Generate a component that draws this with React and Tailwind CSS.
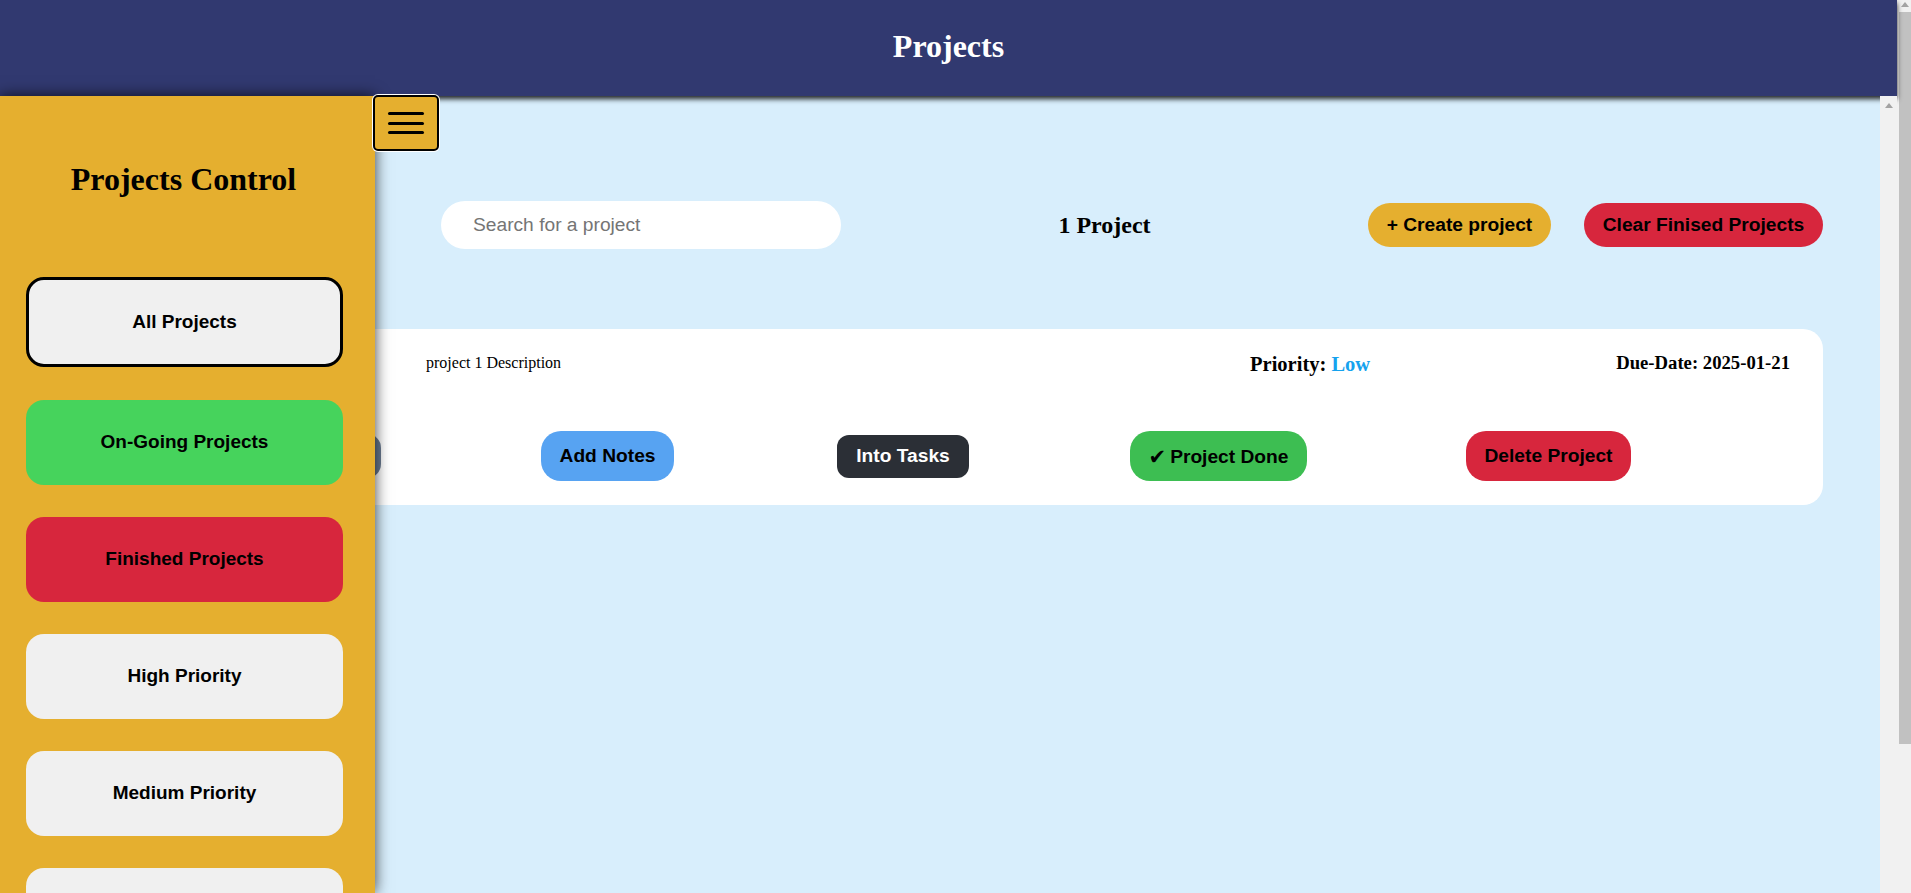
import React from "react";

const sideButtons = [
  { label: "On-Going Projects", color: "bg-[#46D35C]" },
  { label: "Finished Projects", color: "bg-[#D7263D]" },
  { label: "High Priority", color: "bg-[#F0F0F0]" },
  { label: "Medium Priority", color: "bg-[#F0F0F0]" },
  { label: "Low Priority", color: "bg-[#F0F0F0]" },
];

const UpArrow = ({ className }) => (
  <svg className={className} width="8" height="5" viewBox="0 0 8 5">
    <polygon points="0,5 4,0 8,5" fill="#A3A3A3" />
  </svg>
);

const Sidebar = () => {
  return (
    <aside className="absolute left-0 top-[96px] bottom-0 z-20 w-[375px] overflow-hidden bg-[#E5AF2F] shadow-[0_0_14px_rgba(0,0,0,0.75)]">
      <h2 className="pt-[65px] pr-[8px] text-center font-['Liberation_Serif',serif] text-[32px] font-bold leading-[36px] text-black">
        Projects Control
      </h2>
      <div className="mt-[80px] ml-[26px] flex w-[317px] flex-col gap-[32px]">
        <button className="mb-[1px] h-[90px] w-full rounded-[18px] border-[3px] border-black bg-[#F0F0F0] text-[19px] font-bold text-black">
          All Projects
        </button>
        {sideButtons.map((b) => (
          <button
            key={b.label}
            className={`h-[85px] w-full shrink-0 rounded-[18px] ${b.color} text-[19px] font-bold text-black`}
          >
            {b.label}
          </button>
        ))}
      </div>
    </aside>
  );
};

const ProjectCard = () => {
  return (
    <div className="mt-[80px] h-[176px] rounded-[20px] bg-white px-[33px]">
      <div className="flex h-[68px] items-center">
        <div className="w-[336px] font-['Liberation_Serif',serif] text-[21px] font-bold">
          project 1
        </div>
        <p className="font-['Liberation_Serif',serif] text-[16px] text-black">
          project 1 Description
        </p>
        <div className="ml-auto pt-[3px] font-['Liberation_Serif',serif] text-[20.5px] font-bold text-black">
          Priority: <span className="text-[#16A2EE]">Low</span>
        </div>
        <div className="ml-[246px] font-['Liberation_Serif',serif] text-[18.7px] font-bold text-black">
          Due-Date: 2025-01-21
        </div>
      </div>
      <div className="mt-[34px] flex h-[50px] items-center pl-[151px] text-[19.2px] font-bold">
        <button className="h-[44px] w-[140px] rounded-[14px] bg-[#6B7C93] text-black">
          Edit Project
        </button>
        <button className="ml-[160px] h-[50px] w-[133px] rounded-[20px] bg-[#57A3F2] text-black">
          Add Notes
        </button>
        <button className="ml-[163px] h-[43px] w-[132px] rounded-[12px] bg-[#2B2F36] text-white">
          Into Tasks
        </button>
        <button className="ml-[161px] flex h-[50px] w-[177px] items-center justify-center gap-[4px] rounded-[20px] bg-[#3DBE52] pt-[3px] text-black">
          <span className="font-['DejaVu_Sans',sans-serif] text-[21px] leading-none">✔</span>
          <span>Project Done</span>
        </button>
        <button className="ml-[159px] h-[50px] w-[165px] rounded-[20px] bg-[#D7263D] text-black">
          Delete Project
        </button>
      </div>
    </div>
  );
};

export default function App() {
  return (
    <div className="flex h-screen w-full overflow-hidden font-['Liberation_Sans',Arial,sans-serif]">
      <div className="relative flex min-w-0 flex-1 flex-col">
        <header className="relative z-10 flex h-[96px] shrink-0 items-center justify-center bg-[#313970] pb-[5px] shadow-[0_3px_5px_rgba(0,0,0,0.85)]">
          <h1 className="font-['Liberation_Serif',serif] text-[32px] font-bold text-white">
            Projects
          </h1>
        </header>
        <div className="flex min-h-0 flex-1">
          <main className="flex-1 bg-[#D8EEFC] px-[57px] pt-[105px]">
            <div className="flex items-center justify-between pl-[384px]">
              <input
                type="text"
                placeholder="Search for a project"
                className="h-[48px] w-[400px] rounded-full bg-white px-[32px] text-[19.2px] text-black outline-none placeholder:text-[#757575]"
              />
              <h2 className="font-['Liberation_Serif',serif] text-[24px] font-bold text-black">
                1 Project
              </h2>
              <div className="flex items-center gap-[33px] text-[19.2px] font-bold text-black">
                <button className="h-[44px] w-[183px] rounded-full bg-[#E5AF2F]">
                  + Create project
                </button>
                <button className="h-[44px] w-[239px] rounded-full bg-[#D7263D]">
                  Clear Finised Projects
                </button>
              </div>
            </div>
            <ProjectCard />
          </main>
          <div className="relative z-20 flex w-[17px] shrink-0 justify-center bg-[#F1F1F1] pt-[7px]">
            <UpArrow />
          </div>
        </div>
        <Sidebar />
        <button className="absolute left-[373px] top-[95px] z-30 flex h-[56px] w-[66px] flex-col items-center justify-center gap-[6.5px] rounded-[5px] border-2 border-black bg-[#E5AF2F] ring-1 ring-white">
          <span className="h-[3px] w-[36px] rounded-full bg-black" />
          <span className="h-[3px] w-[36px] rounded-full bg-black" />
          <span className="h-[3px] w-[36px] rounded-full bg-black" />
        </button>
      </div>
      <div className="flex w-[14px] shrink-0 flex-col bg-[#F1F1F1]">
        <div className="flex h-[12px] justify-center pt-[2px] pl-[2px]">
          <UpArrow />
        </div>
        <div className="ml-[2px] h-[732px] bg-[#C1C1C1]" />
      </div>
    </div>
  );
}
